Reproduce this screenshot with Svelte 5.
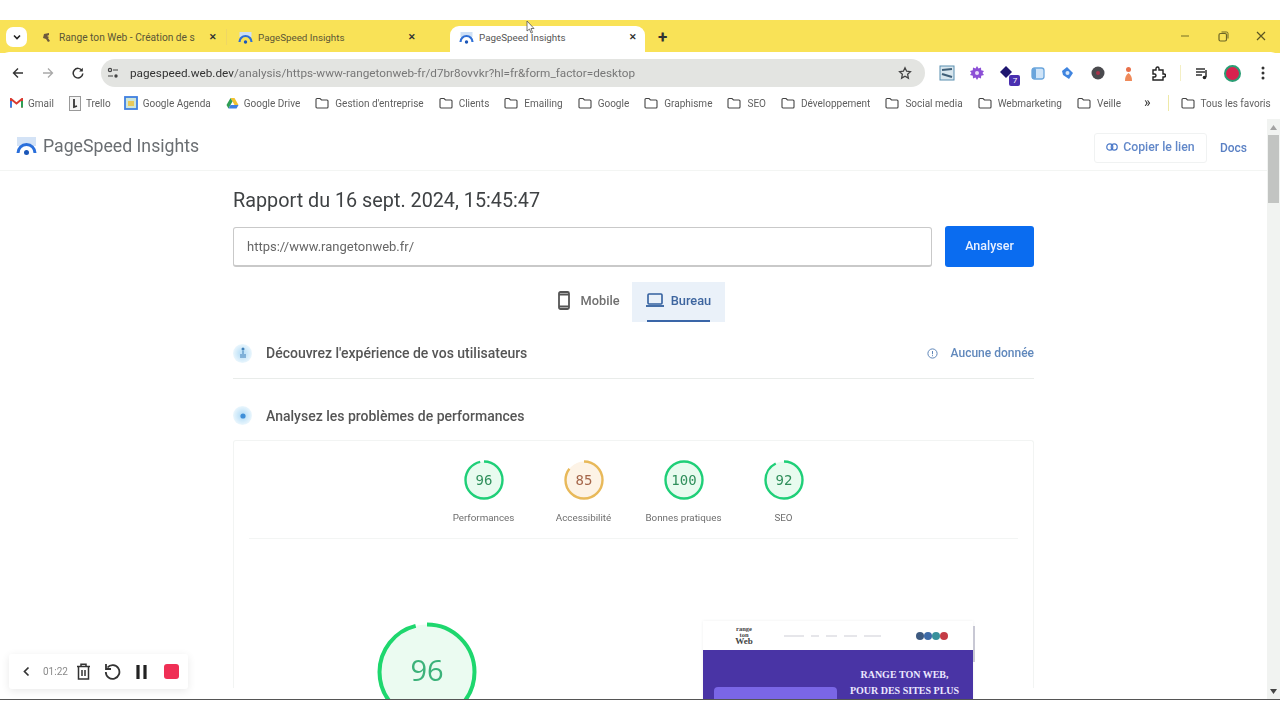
<script>
  const bookmarks = [
    "Gestion d'entreprise",
    'Clients',
    'Emailing',
    'Google',
    'Graphisme',
    'SEO',
    'Développement',
    'Social media',
    'Webmarketing',
    'Veille'
  ];

  const scores = [
    { value: 96, label: 'Performances', color: '#1fcf78', fill: '#e8fbef', text: '#2f8f5b' },
    { value: 85, label: 'Accessibilité', color: '#e8b95a', fill: '#fdf3e6', text: '#a5664a' },
    { value: 100, label: 'Bonnes pratiques', color: '#1fcf78', fill: '#e8fbef', text: '#2f8f5b' },
    { value: 92, label: 'SEO', color: '#1fcf78', fill: '#e8fbef', text: '#2f8f5b' }
  ];

  const r = 18.5;
  const circ = 2 * Math.PI * r;
</script>

<div class="screen">
  <div class="top-gap"></div>

  <div class="tabstrip">
    <button class="tab-menu" aria-label="Onglets">
      <svg width="10" height="10" viewBox="0 0 10 10"><path d="M2 3.500 5 6.500 8 3.500" fill="none" stroke="#222" stroke-width="1.600"/></svg>
    </button>
    <div class="tab first">
      <svg class="fav-small" width="9" height="11" viewBox="0 0 9 11"><path d="M7 1 2 2 1 6l3 1 2 3 2-1-2-3 1-1-2-1 2-1z" fill="#6e5a3c"/></svg>
      <span class="tab-title">Range ton Web - Création de s</span>
      <span class="x">✕</span>
    </div>
    <div class="tab second">
      <svg width="15" height="13" viewBox="0 0 15 13">
        <path d="M1.500 1h12v5H1.500z" fill="#cfe0f5"/>
        <path d="M1.500 11a6 6 0 0 1 12 0" fill="none" stroke="#2f6fd6" stroke-width="2.200"/>
        <circle cx="7.500" cy="11" r="1.700" fill="#1a56b8"/>
      </svg>
      <span class="tab-title">PageSpeed Insights</span>
      <span class="x">✕</span>
    </div>
    <div class="tab active">
      <svg width="15" height="13" viewBox="0 0 15 13">
        <path d="M1.500 1h12v5H1.500z" fill="#cfe0f5"/>
        <path d="M1.500 11a6 6 0 0 1 12 0" fill="none" stroke="#2f6fd6" stroke-width="2.200"/>
        <circle cx="7.500" cy="11" r="1.700" fill="#1a56b8"/>
      </svg>
      <span class="tab-title">PageSpeed Insights</span>
      <span class="x">✕</span>
    </div>
    <span class="plus">+</span>
    <div class="win-controls">
      <svg width="10" height="10" viewBox="0 0 10 10"><path d="M1 5h8" stroke="#8a8130" stroke-width="1.200"/></svg>
      <svg width="11" height="11" viewBox="0 0 11 11"><rect x="1" y="2.500" width="7.500" height="7.500" rx="1.500" fill="none" stroke="#6d6626" stroke-width="1.200"/><path d="M3.500 1h5a1.500 1.500 0 0 1 1.500 1.500v5" fill="none" stroke="#6d6626" stroke-width="1"/></svg>
      <svg width="10" height="10" viewBox="0 0 10 10"><path d="M1 1l8 8M9 1l-8 8" stroke="#5c5622" stroke-width="1.200"/></svg>
    </div>
  </div>

  <div class="toolbar">
    <div class="nav">
      <svg width="12" height="12" viewBox="0 0 12 12"><path d="M11 6H1.500M6 1.500 1.500 6 6 10.500" fill="none" stroke="#333" stroke-width="1.400"/></svg>
      <svg width="12" height="12" viewBox="0 0 12 12"><path d="M1 6h9.500M6 1.500 10.500 6 6 10.500" fill="none" stroke="#a9a9a9" stroke-width="1.300"/></svg>
      <svg width="12" height="12" viewBox="0 0 12 12"><path d="M10 3.500A4.800 4.800 0 1 0 10.800 6.500" fill="none" stroke="#333" stroke-width="1.500"/><path d="M10.800 .8v3.700H7.100z" fill="#333"/></svg>
    </div>
    <div class="omnibox">
      <svg width="12" height="12" viewBox="0 0 12 12"><circle cx="3" cy="3" r="1.600" fill="none" stroke="#444" stroke-width="1.200"/><path d="M6 3h5M1 9h5" stroke="#444" stroke-width="1.200"/><circle cx="9" cy="9" r="1.700" fill="#444"/></svg>
      <span class="url"><b>pagespeed.web.dev</b>/analysis/https-www-rangetonweb-fr/d7br8ovvkr?hl=fr&amp;form_factor=desktop</span>
      <svg class="star" width="14" height="14" viewBox="0 0 24 24"><path d="M12 3l2.800 6 6.500.8-4.800 4.500 1.300 6.500L12 17.500 6.200 20.800l1.300-6.500L2.700 9.800 9.200 9z" fill="none" stroke="#444" stroke-width="2.200"/></svg>
    </div>
    <div class="extensions">
      <svg width="16" height="16" viewBox="0 0 16 16"><rect x="1" y="1" width="14" height="14" fill="#d8e6ee" stroke="#5a8fb0"/><path d="M3 5l10-1M3 9l10 3" stroke="#3f5f78" stroke-width="2.200"/></svg>
      <svg width="14" height="14" viewBox="0 0 14 14"><path d="M7 0l1.500 2.500L11 1.500l.2 2.700 2.800.8-1.500 2 1.500 2-2.800.8L11 12.500l-2.500-1L7 14l-1.500-2.500-2.500 1-.2-2.700L0 9l1.500-2L0 5l2.800-.8L3 1.500l2.500 1z" fill="#8c4fd6"/><circle cx="7" cy="7" r="2" fill="#e8dcf8"/></svg>
      <span class="ext-badge">
        <svg width="16" height="16" viewBox="0 0 16 16"><path d="M7 1l6 6-6 6-6-6z" fill="#1f1670"/></svg>
        <span class="count">7</span>
      </span>
      <svg width="14" height="13" viewBox="0 0 14 13"><rect x="1" y="1" width="12" height="11" rx="2.500" fill="#cfe4f8" stroke="#6aa5dc" stroke-width="1.300"/><rect x="1" y="1" width="4" height="11" rx="1.500" fill="#6aa5dc"/></svg>
      <svg width="13" height="14" viewBox="0 0 13 14"><path d="M1 5l5-4 6 6-4 6-6-4z" fill="#3f84df"/><circle cx="6.500" cy="7" r="2" fill="#d8e8fa"/></svg>
      <svg width="14" height="14" viewBox="0 0 14 14"><circle cx="7" cy="7" r="6.500" fill="#4a4a4e"/><circle cx="7" cy="7" r="2" fill="#a8324a"/></svg>
      <svg width="11" height="15" viewBox="0 0 11 15"><circle cx="5.500" cy="3.500" r="2.500" fill="#e8704a"/><path d="M2 15c0-4 1-6 3.500-8C8 9 9 11 9 15z" fill="#ef8a5a"/></svg>
      <svg width="15" height="15" viewBox="0 0 15 15"><path d="M2 4h3V2.500a1.500 1.500 0 0 1 3 0V4h4v4h1a1.500 1.500 0 0 1 0 3h-1v3H2v-3h1.500a1.500 1.500 0 0 0 0-3H2z" fill="none" stroke="#222" stroke-width="1.400"/></svg>
      <span class="ext-sep"></span>
      <svg width="15" height="13" viewBox="0 0 15 13"><path d="M1 2h9M1 5h9M1 8h6" stroke="#333" stroke-width="1.400"/><path d="M11 3v7" stroke="#222" stroke-width="1.400"/><circle cx="9.500" cy="10.500" r="1.800" fill="#222"/></svg>
      <span class="avatar"></span>
      <svg width="4" height="14" viewBox="0 0 4 14"><circle cx="2" cy="2" r="1.500" fill="#333"/><circle cx="2" cy="7" r="1.500" fill="#333"/><circle cx="2" cy="12" r="1.500" fill="#333"/></svg>
    </div>
  </div>

  <div class="bookmarks">
    <span class="bm app">
      <svg width="13" height="10" viewBox="0 0 13 10"><path d="M1 9.500V1l5.500 4.500L12 1v8.500" fill="none" stroke="#d93a30" stroke-width="2"/><path d="M1 9.500V3" stroke="#3f7fe0" stroke-width="2"/><path d="M12 9.500V3" stroke="#2f9e55" stroke-width="2"/></svg>
      Gmail
    </span>
    <span class="bm app trello">
      <svg width="12" height="15" viewBox="0 0 12 15"><rect x=".5" y=".5" width="11" height="14" fill="#f4f4f4" stroke="#999"/><path d="M5 3v8l3-1" fill="none" stroke="#333" stroke-width="1.800"/></svg>
      Trello
    </span>
    <span class="bm app">
      <svg width="14" height="14" viewBox="0 0 14 14"><rect x="1" y="1" width="12" height="12" fill="#cfe6d8" stroke="#3f7fe0" stroke-width="1.800"/><rect x="4" y="5" width="6" height="5" fill="#e8c95a"/></svg>
      Google Agenda
    </span>
    <span class="bm app">
      <svg width="13" height="12" viewBox="0 0 13 12"><path d="M4.500 1h4l4 7h-4z" fill="#f2c230"/><path d="M4.500 1 .5 8l2 3.500 4-7z" fill="#2f9e55"/><path d="M2.500 11.500h8l2-3.500h-8z" fill="#3f7fe0"/></svg>
      Google Drive
    </span>
    {#each bookmarks as label}
      <span class="bm">
        <svg width="14" height="12" viewBox="0 0 14 12"><path d="M1 2.500a1 1 0 0 1 1-1h3l1.500 1.500H12a1 1 0 0 1 1 1V10a1 1 0 0 1-1 1H2a1 1 0 0 1-1-1z" fill="none" stroke="#444" stroke-width="1.100"/></svg>
        {label}
      </span>
    {/each}
    <span class="more">»</span>
    <span class="bm-sep"></span>
    <span class="bm all">
      <svg width="14" height="12" viewBox="0 0 14 12"><path d="M1 2.500a1 1 0 0 1 1-1h3l1.500 1.500H12a1 1 0 0 1 1 1V10a1 1 0 0 1-1 1H2a1 1 0 0 1-1-1z" fill="none" stroke="#444" stroke-width="1.100"/></svg>
      Tous les favoris
    </span>
  </div>

  <div class="viewport">
    <div class="page">
      <header class="psi-header">
        <div class="brand">
          <svg width="21" height="20" viewBox="0 0 21 20">
            <path d="M1 1h19v9H1z" fill="#d4e3f6"/>
            <path d="M2 17a8.500 8.500 0 0 1 17 0" fill="none" stroke="#2a6fdb" stroke-width="3"/>
            <circle cx="10.500" cy="16.500" r="2.500" fill="#1a56b8"/>
          </svg>
          <span>PageSpeed Insights</span>
        </div>
        <div class="header-actions">
          <button class="copy">
            <svg width="12" height="8" viewBox="0 0 12 8"><rect x=".8" y=".8" width="6" height="6.400" rx="3" fill="none" stroke="#4a78c8" stroke-width="1.200"/><rect x="5.200" y=".8" width="6" height="6.400" rx="3" fill="none" stroke="#4a78c8" stroke-width="1.200"/></svg>
            Copier le lien
          </button>
          <span class="docs">Docs</span>
        </div>
      </header>

      <main class="report">
        <h1>Rapport du 16 sept. 2024, 15:45:47</h1>

        <div class="search">
          <div class="field">https://www.rangetonweb.fr/</div>
          <button class="analyse">Analyser</button>
        </div>

        <div class="devices">
          <div class="device phone">
            <svg width="12" height="19" viewBox="0 0 12 19"><rect x="1" y="1" width="10" height="17" rx="1.500" fill="#fff" stroke="#555" stroke-width="1.800"/><path d="M1 3.500h10M1 15.500h10" stroke="#555" stroke-width="1.800"/></svg>
            Mobile
          </div>
          <div class="device current">
            <svg width="18" height="14" viewBox="0 0 18 14"><rect x="2" y="1" width="14" height="10" rx="1" fill="none" stroke="#33609f" stroke-width="1.600"/><path d="M0 13h18" stroke="#33609f" stroke-width="1.800"/></svg>
            Bureau
            <span class="underline"></span>
          </div>
        </div>

        <div class="row bordered">
          <span class="dot-icon">
            <svg width="6" height="12" viewBox="0 0 6 12"><circle cx="3" cy="2" r="1.500" fill="#3f7fb8"/><path d="M3 4v7M1 7v4M5 7v4" stroke="#3f7fb8"/></svg>
          </span>
          <span class="row-title">Découvrez l'expérience de vos utilisateurs</span>
          <span class="no-data">
            <svg width="11" height="11" viewBox="0 0 11 11"><circle cx="5.500" cy="5.500" r="4.600" fill="none" stroke="#5f86b8" stroke-width="1"/><path d="M5.500 3v3.200M5.500 7.200v1" stroke="#5f86b8"/></svg>
            Aucune donnée
          </span>
        </div>

        <div class="row">
          <span class="dot-icon">
            <svg width="6" height="6" viewBox="0 0 6 6"><circle cx="3" cy="3" r="2.600" fill="#3f8fd8"/></svg>
          </span>
          <span class="row-title">Analysez les problèmes de performances</span>
        </div>

        <section class="card">
          <div class="scores">
            {#each scores as s}
              <div class="score">
                <svg width="40" height="40" viewBox="0 0 40 40">
                  <circle cx="20" cy="20" r={r} fill={s.fill} />
                  <circle
                    cx="20" cy="20" r={r} fill="none" stroke={s.color} stroke-width="2.400"
                    stroke-dasharray="{circ * s.value / 100} {circ}"
                    transform="rotate(-90 20 20)"
                  />
                  <text x="20" y="25" text-anchor="middle" fill={s.text}>{s.value}</text>
                </svg>
                <span>{s.label}</span>
              </div>
            {/each}
          </div>

          <div class="summary">
            <svg class="big-gauge" width="100" height="100" viewBox="0 0 100 100">
              <circle cx="50" cy="50" r="47.500" fill="#ebfbf1" />
              <circle
                cx="50" cy="50" r="47.500" fill="none" stroke="#1ed76e" stroke-width="4"
                stroke-dasharray="{2 * Math.PI * 47.5 * 0.96} 400"
                transform="rotate(-90 50 50)"
              />
              <text x="50" y="59" text-anchor="middle">96</text>
            </svg>

            <div class="preview">
              <div class="preview-nav">
                <span class="mini-logo">range ton<b>Web</b></span>
                <span class="mini-links">
                  {#each [20, 8, 11, 13, 17] as w}
                    <i style="width: {w}px"></i>
                  {/each}
                </span>
                <span class="mini-dots">
                  <i class="d1"></i><i class="d2"></i><i class="d3"></i><i class="d4"></i>
                </span>
              </div>
              <div class="hero">
                <div class="hero-box"></div>
                <div class="hero-text">RANGE TON WEB,<br />POUR DES SITES PLUS</div>
              </div>
              <span class="mini-scroll"></span>
            </div>
          </div>
        </section>
      </main>
    </div>

    <aside class="scrollbar">
      <svg width="7" height="5" viewBox="0 0 7 5"><path d="M3.500 0 7 5H0z" fill="#a3a3a3"/></svg>
      <span class="thumb"></span>
      <svg class="down" width="7" height="5" viewBox="0 0 7 5"><path d="M3.500 5 7 0H0z" fill="#444"/></svg>
    </aside>

    <div class="recorder">
      <svg class="r-back" width="7" height="11" viewBox="0 0 7 11"><path d="M5.500 1.500 1.500 5.500l4 4" fill="none" stroke="#333" stroke-width="1.700"/></svg>
      <span class="time">01:22</span>
      <svg class="r-trash" width="15" height="17" viewBox="0 0 15 17"><path d="M1 3.500h13M5 3V1.200h5V3M2.500 3.500V16h10V3.500M6 7v6M9 7v6" fill="none" stroke="#333" stroke-width="1.500"/></svg>
      <svg class="r-undo" width="17" height="17" viewBox="0 0 17 17"><path d="M3.500 4.500A6.800 6.800 0 1 1 1.800 9" fill="none" stroke="#333" stroke-width="1.800"/><path d="M2 1v5h5" fill="none" stroke="#333" stroke-width="1.800"/></svg>
      <svg class="r-pause" width="11" height="14" viewBox="0 0 11 14"><path d="M2 0v14M9 0v14" stroke="#222" stroke-width="3.200"/></svg>
      <span class="rec"></span>
    </div>
  </div>

  <div class="bottom-gap"></div>

  <svg class="cursor" width="9" height="14" viewBox="0 0 9 14"><path d="M1 1v10l2.500-2 1.500 4 1.500-.6L5 8.500h3z" fill="#fff" stroke="#555" stroke-width=".8"/></svg>
</div>

<style>
  :global(body) {
    margin: 0;
    background: #fff;
  }

  .screen {
    position: relative;
    width: 1280px;
    height: 720px;
    display: flex;
    flex-direction: column;
    overflow: hidden;
    font-family: Roboto, "Liberation Sans", sans-serif;
    color: #3c4043;
    filter: blur(0.5px);
  }

  .top-gap {
    height: 20px;
    flex: none;
  }

  /* tabs */
  .tabstrip {
    height: 33px;
    flex: none;
    display: flex;
    align-items: flex-end;
    background: #f9e257;
    font-size: 9.800px;
    color: #5b5636;
  }

  .tab-menu {
    width: 21px;
    height: 20px;
    margin: 0 0 6px 6px;
    padding: 0;
    border: 0;
    border-radius: 7px;
    background: #fff;
    display: flex;
    align-items: center;
    justify-content: center;
  }

  .tab {
    height: 27px;
    display: flex;
    align-items: center;
    box-sizing: border-box;
  }

  .tab .x {
    margin-left: auto;
    font-size: 9px;
    font-weight: 700;
    color: #333;
  }

  .tab.first {
    width: 200px;
    padding: 0 10px 5px 15px;
    position: relative;
  }

  .tab.first::after {
    content: "";
    position: absolute;
    right: 0;
    top: 3px;
    height: 16px;
    width: 1px;
    background: #efd764;
  }

  .fav-small {
    margin-right: 8px;
  }

  .tab.first .tab-title {
    font-size: 10.200px;
    white-space: nowrap;
  }

  .tab.second {
    width: 223px;
    padding: 0 34px 5px 11px;
  }

  .tab.second .tab-title,
  .tab.active .tab-title {
    margin-left: 5px;
  }

  .tab.active {
    width: 195px;
    padding: 0 8px 5px 9px;
    background: #fff;
    border-radius: 9px 9px 0 0;
    color: #555;
  }

  .plus {
    margin: 0 0 6px 13px;
    font-size: 17px;
    line-height: 20px;
    font-weight: 700;
    color: #333;
  }

  .win-controls {
    margin-left: auto;
    align-self: center;
    width: 86px;
    padding-right: 14px;
    display: flex;
    justify-content: space-between;
    align-items: center;
    margin-top: -1px;
  }

  /* toolbar */
  .toolbar {
    height: 35px;
    flex: none;
    box-sizing: border-box;
    padding-top: 7px;
    display: flex;
    background: #fff;
    border-radius: 9px 9px 0 0;
    margin-top: -1px;
  }

  .nav {
    width: 101px;
    box-sizing: border-box;
    padding: 0 17px 0 12px;
    display: flex;
    align-items: center;
    justify-content: space-between;
    flex: none;
  }

  .omnibox {
    width: 824px;
    height: 28px;
    flex: none;
    box-sizing: border-box;
    padding: 0 13px 0 6px;
    display: flex;
    align-items: center;
    background: #e3e4e1;
    border-radius: 14px;
    font-size: 11.750px;
    color: #777;
  }

  .url {
    margin-left: 11px;
    white-space: nowrap;
  }

  .url b {
    font-weight: 400;
    color: #333;
  }

  .star {
    margin-left: auto;
  }

  .extensions {
    height: 28px;
    margin-left: 7px;
    display: grid;
    grid-template-columns: repeat(8, 30.200px) 14px repeat(3, 30px);
    align-items: center;
    justify-items: center;
  }

  .ext-badge {
    position: relative;
    display: flex;
  }

  .count {
    position: absolute;
    right: -5px;
    bottom: -5px;
    width: 11px;
    height: 11px;
    background: #4a2fb0;
    border-radius: 2px;
    font-size: 8px;
    line-height: 11px;
    text-align: center;
    color: #fff;
  }

  .ext-sep {
    width: 1px;
    height: 16px;
    background: #f4efc4;
  }

  .avatar {
    width: 13px;
    height: 13px;
    border-radius: 50%;
    background: #d8224e;
    border: 2.500px solid #2a9d74;
  }

  /* bookmarks */
  .bookmarks {
    height: 32px;
    flex: none;
    display: flex;
    align-items: center;
    padding: 0 0 0 10px;
    background: #fff;
    font-size: 10px;
    color: #5f5f5f;
    white-space: nowrap;
  }

  .bm {
    display: flex;
    align-items: center;
    gap: 6px;
    margin-right: 15px;
  }

  .bm.app {
    gap: 5px;
    margin-right: 15px;
  }

  .bm.trello {
    margin-right: 13px;
  }

  .more {
    margin: -3px 0 0 8px;
    font-size: 14px;
    color: #333;
  }

  .bm-sep {
    width: 1px;
    height: 16px;
    margin: 0 12px 0 17px;
    background: #eee9a8;
  }

  .bm.all {
    margin: 0;
  }

  /* page */
  .viewport {
    position: relative;
    height: 580px;
    flex: none;
    display: flex;
    overflow: hidden;
    border-bottom: 1px solid #555;
  }

  .page {
    flex: 1;
    min-width: 0;
  }

  .psi-header {
    height: 52px;
    box-sizing: border-box;
    padding: 10px 20px 0 16px;
    display: flex;
    align-items: flex-start;
    justify-content: space-between;
    border-bottom: 1px solid #f3f5f3;
  }

  .brand {
    display: flex;
    align-items: center;
    gap: 6px;
    font-size: 17.700px;
    color: #6a6e72;
    margin-top: 7px;
  }

  .header-actions {
    display: flex;
    align-items: center;
    gap: 13px;
    margin-top: 4px;
  }

  .copy {
    width: 113px;
    height: 30px;
    padding: 0 0 2px;
    display: flex;
    align-items: center;
    justify-content: center;
    gap: 5px;
    background: #fff;
    border: 1px solid #f0f2f2;
    border-radius: 3px;
    font: 500 12.300px Roboto, sans-serif;
    color: #6288c9;
  }

  .docs {
    font-size: 12px;
    font-weight: 500;
    color: #5a80c4;
    margin-top: -1px;
  }

  .report {
    width: 801px;
    margin-left: 233px;
  }

  h1 {
    margin: 18px 0 13px;
    font-size: 19.800px;
    line-height: 24px;
    font-weight: 400;
    color: #3f4244;
  }

  .search {
    display: flex;
    gap: 13px;
    height: 41px;
  }

  .field {
    flex: 1;
    box-sizing: border-box;
    height: 40px;
    margin-top: 1px;
    padding: 0 13px;
    display: flex;
    align-items: center;
    border: 1px solid #c9c9c9;
    border-bottom-width: 2px;
    border-radius: 3px;
    font-size: 13px;
    color: #666;
  }

  .analyse {
    width: 89px;
    padding: 0 0 2px;
    border: 0;
    border-radius: 3px;
    background: #0a6cf0;
    font: 500 12.500px Roboto, sans-serif;
    color: #e8f0ff;
  }

  .devices {
    margin-top: 15px;
    height: 40px;
    display: flex;
    justify-content: center;
    padding-right: 3px;
  }

  .device {
    position: relative;
    width: 93px;
    display: flex;
    align-items: center;
    justify-content: center;
    gap: 10px;
    font-size: 12.800px;
    font-weight: 500;
    color: #707070;
    padding-bottom: 4px;
    box-sizing: border-box;
  }

  .device.phone {
    padding-left: 7px;
  }

  .device.current {
    background: #eaf1f9;
    color: #3d659f;
    gap: 7px;
  }

  .underline {
    position: absolute;
    left: 15px;
    right: 15px;
    bottom: 0;
    height: 2px;
    background: #3a66a8;
  }

  .row {
    height: 37px;
    display: flex;
    align-items: center;
    gap: 14px;
  }

  .row.bordered {
    margin-top: 11px;
    height: 40px;
    padding-bottom: 5px;
    margin-bottom: 18px;
    border-bottom: 1px solid #e9ecea;
  }

  .dot-icon {
    width: 19px;
    height: 19px;
    border-radius: 50%;
    background: radial-gradient(circle, #bfe2f8 20%, #eef8fd 75%);
    display: flex;
    align-items: center;
    justify-content: center;
  }

  .row-title {
    font-size: 14px;
    font-weight: 500;
    color: #555;
  }

  .no-data {
    margin-left: auto;
    display: flex;
    align-items: center;
    gap: 13px;
    font-size: 12px;
    font-weight: 500;
    color: #6088bc;
  }

  .card {
    margin-top: 6px;
    height: 248px;
    border: 1px solid #f2f4f3;
    border-bottom: 0;
    border-radius: 3px 3px 0 0;
    box-sizing: border-box;
  }

  .scores {
    height: 98px;
    box-sizing: border-box;
    margin: 0 15px;
    padding-top: 19px;
    display: flex;
    justify-content: center;
    border-bottom: 1px solid #f3f5f4;
  }

  .score {
    width: 100px;
    display: flex;
    flex-direction: column;
    align-items: center;
    gap: 12px;
    font-size: 9.800px;
    color: #6e6e6e;
  }

  .score text {
    font: 500 14px "DejaVu Sans Mono", monospace;
  }

  .summary {
    display: flex;
    justify-content: space-between;
    align-items: flex-start;
    padding: 83px 60px 0 143px;
  }

  .big-gauge text {
    font: 400 29px "Open Sans", sans-serif;
    fill: #3cb27a;
  }

  .preview {
    position: relative;
    width: 270px;
    margin-top: -1px;
    box-shadow: 0 0 3px #eef0f0;
  }

  .preview-nav {
    height: 29px;
    display: flex;
    align-items: center;
    padding: 0 25px 0 29px;
    background: #fff;
  }

  .mini-logo {
    width: 24px;
    font: 700 6.500px/6px "Liberation Serif", serif;
    color: #444;
    text-align: center;
  }

  .mini-logo b {
    display: block;
    font-size: 9px;
    line-height: 7px;
  }

  .mini-links {
    margin-left: 28px;
    display: flex;
    gap: 7px;
  }

  .mini-links i {
    height: 2px;
    background: #e6e6ea;
  }

  .mini-dots {
    margin-left: auto;
    display: flex;
    gap: 0;
  }

  .mini-dots i {
    width: 8px;
    height: 8px;
    border-radius: 50%;
  }

  .d1 { background: #3d5a80; }
  .d2 { background: #3d6ba8; }
  .d3 { background: #38909c; }
  .d4 { background: #c43b45; }

  .hero {
    height: 90px;
    position: relative;
    background: #4934a5;
  }

  .hero-box {
    position: absolute;
    left: 11px;
    top: 37px;
    width: 123px;
    height: 60px;
    border-radius: 4px;
    background: #7a66e6;
  }

  .hero-text {
    position: absolute;
    right: 13px;
    top: 17px;
    width: 111px;
    text-align: center;
    font: 700 10px/16px "Liberation Serif", serif;
    color: #ece8ff;
    white-space: nowrap;
  }

  .mini-scroll {
    position: absolute;
    right: -2px;
    top: 5px;
    width: 2px;
    height: 36px;
    background: #c8c8d4;
  }

  .scrollbar {
    position: relative;
    width: 13px;
    flex: none;
    display: flex;
    flex-direction: column;
    align-items: center;
    padding-top: 6px;
    box-sizing: border-box;
    background: #f1f3f1;
  }

  .thumb {
    width: 11px;
    height: 68px;
    margin-top: 5px;
    background: #c2c4c2;
  }

  .down {
    margin-top: auto;
    margin-bottom: 5px;
  }

  .recorder {
    position: absolute;
    left: 9px;
    top: 535px;
    width: 179px;
    height: 35px;
    box-sizing: border-box;
    padding-left: 14px;
    display: flex;
    align-items: center;
    background: #fff;
    border-radius: 3px;
    box-shadow: 0 2px 8px rgba(0, 0, 0, 0.09);
  }

  .time {
    margin-left: 13px;
    font-size: 10px;
    color: #8a8a8a;
  }

  .r-trash { margin-left: 8px; }
  .r-undo { margin-left: 13px; }
  .r-pause { margin-left: 15px; }

  .rec {
    margin-left: 17px;
    width: 15px;
    height: 15px;
    border-radius: 3px;
    background: #ef2f55;
  }

  .bottom-gap {
    flex: 1;
    background: #fff;
  }

  .cursor {
    position: absolute;
    left: 526px;
    top: 20px;
  }
</style>
